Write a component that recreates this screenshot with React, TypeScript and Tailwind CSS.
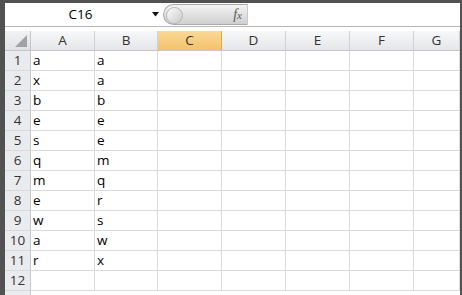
import React from 'react'

const cols = ['A', 'B', 'C', 'D', 'E', 'F', 'G']
const widths = ['w-[64px]', 'w-[63px]', 'w-[64px]', 'w-[64px]', 'w-[64px]', 'w-[64px]', 'flex-1']
const data: [string, string][] = [
  ['a', 'a'], ['x', 'a'], ['b', 'b'], ['e', 'e'], ['s', 'e'], ['q', 'm'],
  ['m', 'q'], ['e', 'r'], ['w', 's'], ['a', 'w'], ['r', 'x'], ['', ''],
]

export default function App() {
  return (
    <div className="w-[462px] h-[295px] overflow-hidden bg-neutral-600 pl-[5px] pt-[3px] pr-[2px] font-['Open_Sans','Liberation_Sans',sans-serif] text-[13px] text-black">
      <div className="h-full bg-white flex flex-col">
        {/* formula bar */}
        <div className="h-[24px] shrink-0 flex items-stretch border-b border-[#b8b8b8]">
          <div className="w-[158px] flex items-center">
            <span className="flex-1 text-center pl-[4px] text-[13.5px]">C16</span>
            <svg width="8" height="5" viewBox="0 0 8 5" className="mr-[3px]">
              <path d="M0 0 H7 L3.5 4.5 Z" fill="#111" />
            </svg>
          </div>
          <div className="w-[85px] my-[1px] relative rounded-l-full bg-gradient-to-b from-[#f4f4f4] via-[#e2e2e2] to-[#cfcfcf] border border-[#a9a9a9] border-r-[#c8c8c8] flex items-center justify-end pr-[5px]">
            <div className="absolute left-[2px] top-[2px] w-[17px] h-[17px] rounded-full bg-gradient-to-br from-[#fdfdfd] to-[#c9c9c9] border border-[#b5b5b5]" />
            <span className="font-['Liberation_Serif',serif] italic text-[14px] text-[#555] leading-none">f<span className="text-[11px]">x</span></span>
          </div>
          <div className="flex-1 bg-white" />
        </div>
        <div className="h-[4px] shrink-0" />
        {/* column headers */}
        <div className="h-[20px] shrink-0 flex border-b border-[#c6c6c6]">
          <div className="w-[26px] relative bg-gradient-to-b from-[#f2f3f4] to-[#dfe1e4] border-r border-[#c6c6c6]">
            <svg width="12" height="12" viewBox="0 0 12 12" className="absolute right-[3px] bottom-[3px]">
              <path d="M12 0 V12 H0 Z" fill="#9fa3a8" />
            </svg>
          </div>
          {cols.map((c, i) => (
            <div
              key={c}
              className={`${widths[i]} flex items-center justify-center border-r text-[13.5px] ${
                c === 'C'
                  ? 'bg-gradient-to-b from-[#fad998] to-[#f3c26a] border-[#e0a94f]'
                  : 'bg-gradient-to-b from-[#f7f8f9] to-[#e4e6e9] border-[#cfd1d4]'
              } text-[#333]`}
            >
              {c}
            </div>
          ))}
        </div>
        {/* rows */}
        {data.map((r, ri) => (
          <div key={ri} className="h-[20px] flex border-b border-[#d9d9d9] shrink-0">
            <div className="w-[26px] flex items-center justify-center bg-[#e9ebee] border-r border-[#c6c6c6] text-[#333] text-[13.5px]">
              {ri + 1}
            </div>
            {cols.map((c, i) => (
              <div key={c} className={`${widths[i]} flex items-center pl-[2px] border-r border-[#d9d9d9] text-[13.5px]`}>
                {i === 0 ? r[0] : i === 1 ? r[1] : ''}
              </div>
            ))}
          </div>
        ))}
        <div className="h-[20px] flex shrink-0">
          <div className="w-[26px] bg-[#e9ebee] border-r border-[#c6c6c6]" />
        </div>
      </div>
    </div>
  )
}
